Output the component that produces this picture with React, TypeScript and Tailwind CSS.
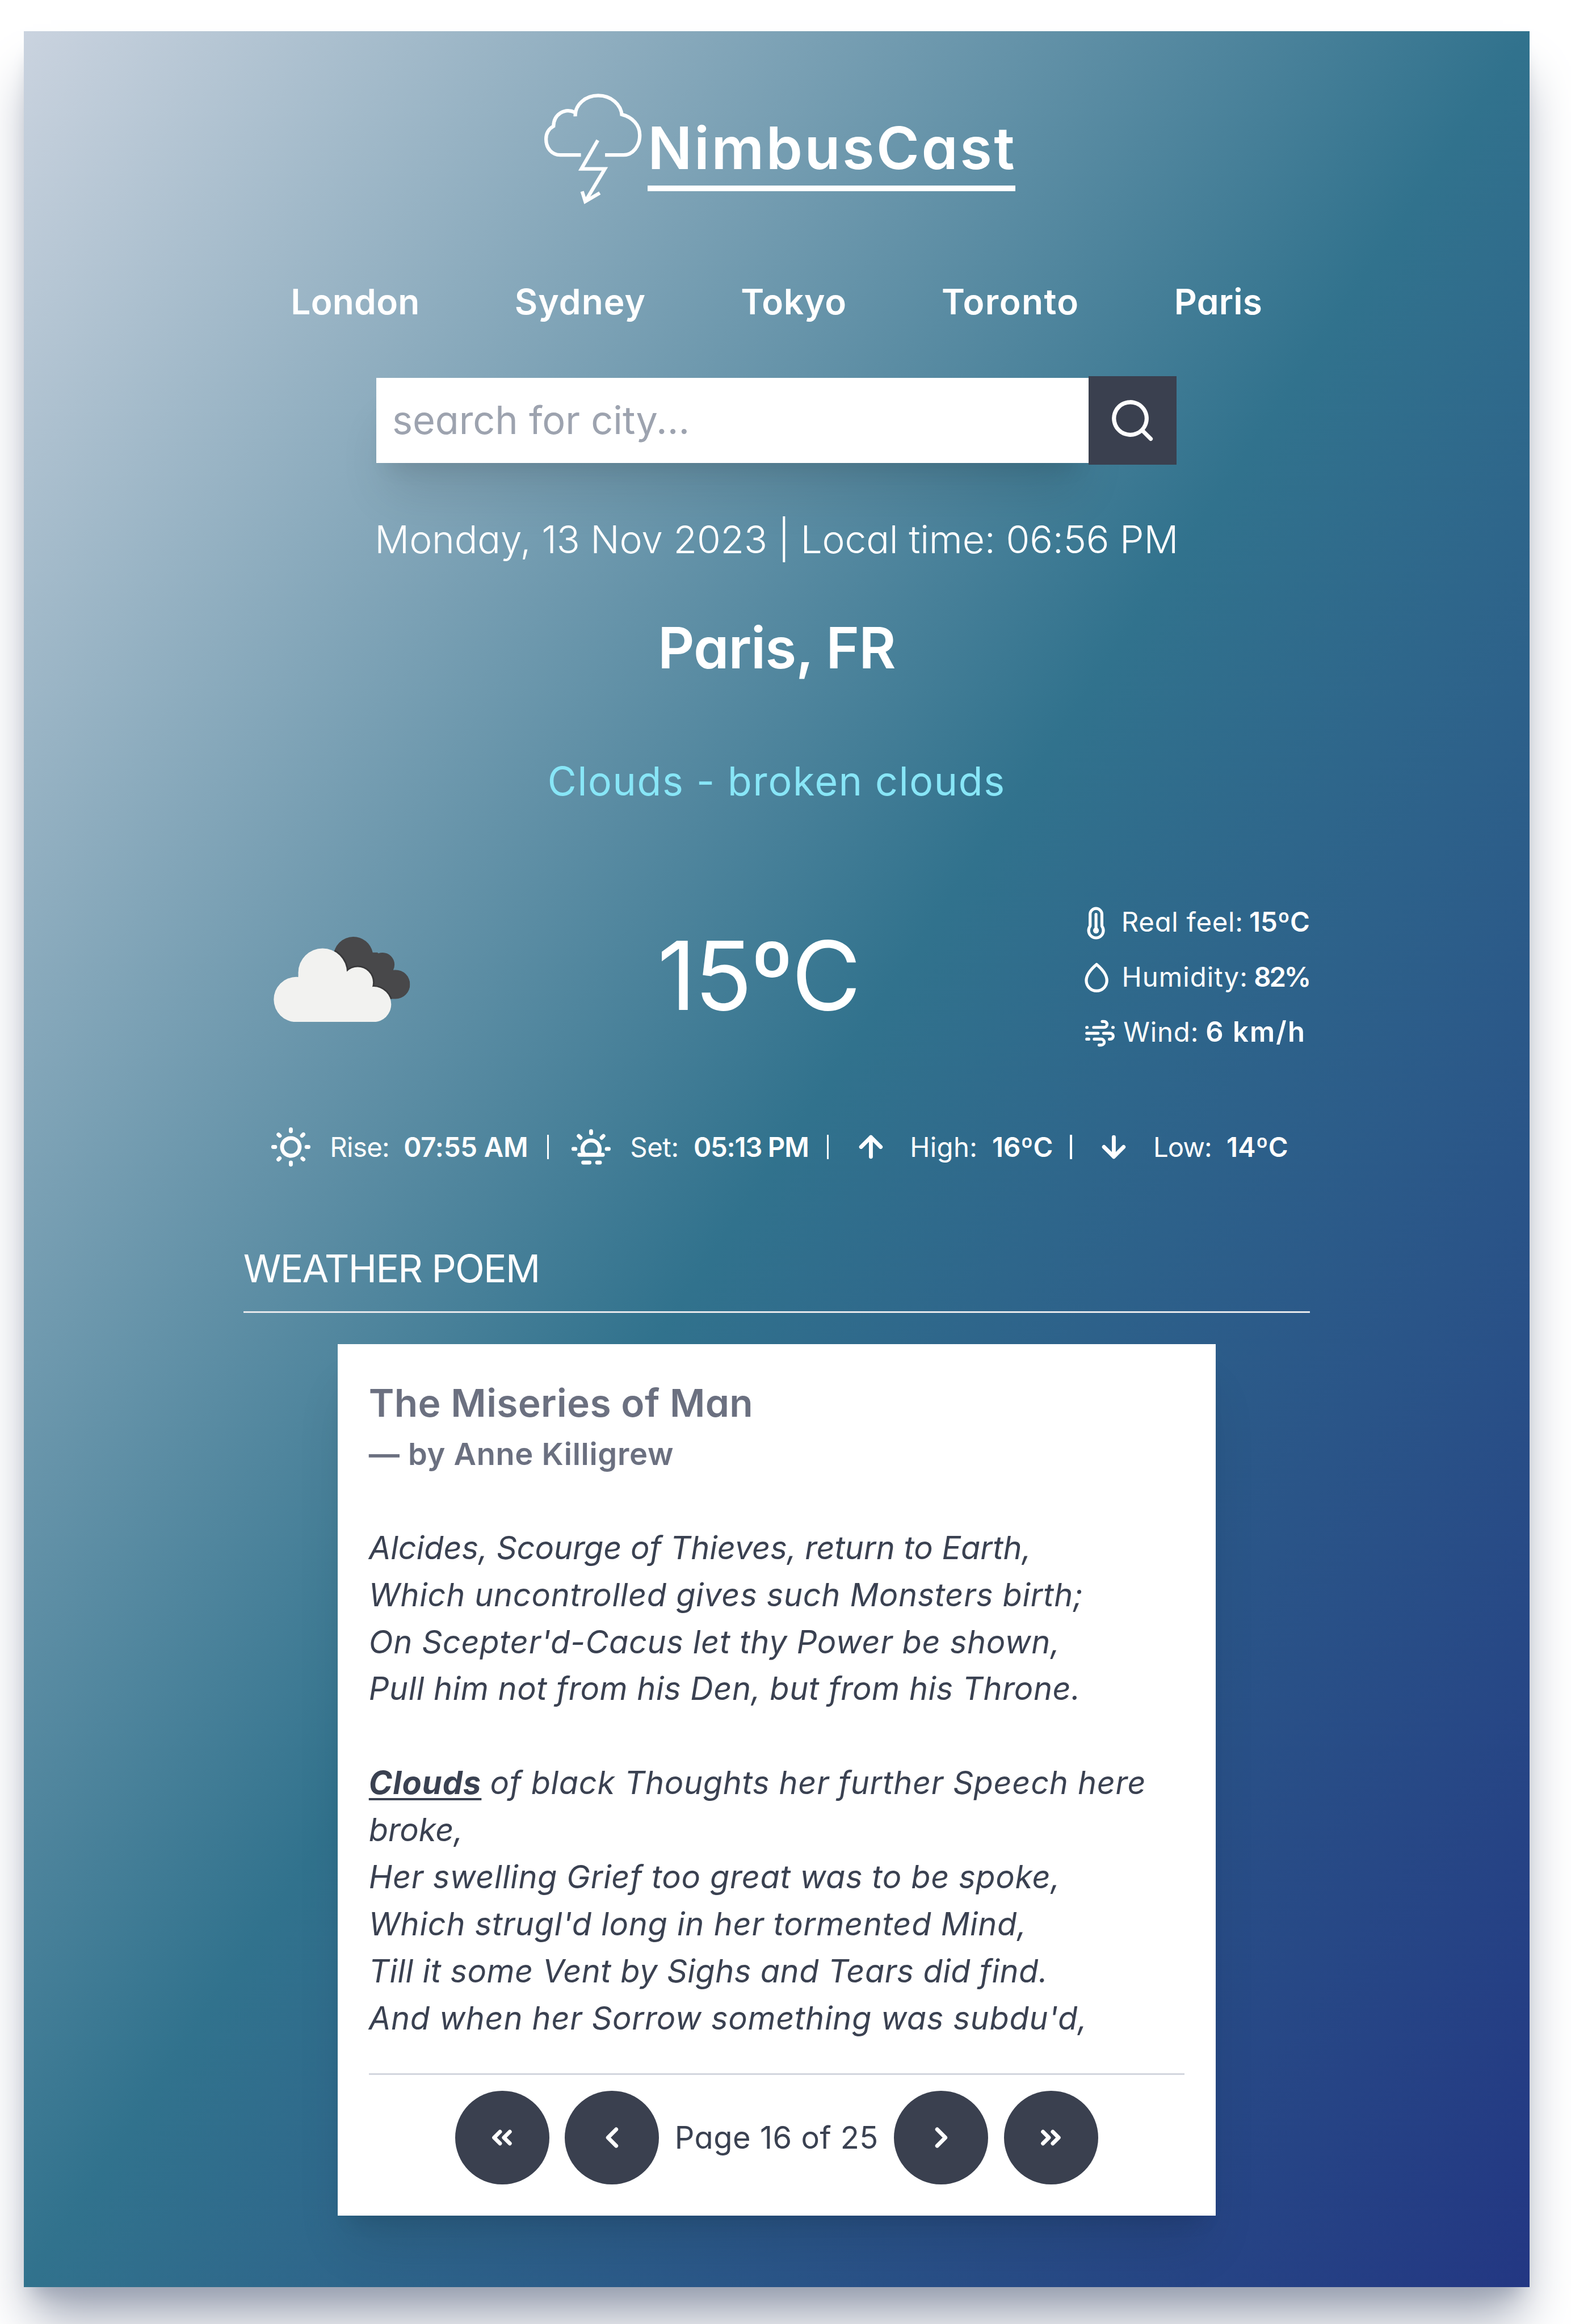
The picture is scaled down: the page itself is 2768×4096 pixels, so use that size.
import type { ReactNode } from "react";

const cities = [
  { name: "London", tracking: "tracking-[0.08px]" },
  { name: "Sydney", tracking: "tracking-[0.32px]" },
  { name: "Tokyo", tracking: "tracking-[0.2px]" },
  { name: "Toronto", tracking: "tracking-[0.43px]" },
  { name: "Paris", tracking: "tracking-[0.08px]" },
];

const firstStanza = [
  { text: "Alcides, Scourge of Thieves, return to Earth,", tracking: "tracking-[-0.02px]" },
  { text: "Which uncontrolled gives such Monsters birth;", tracking: "tracking-[0.19px]" },
  { text: "On Scepter'd-Cacus let thy Power be shown,", tracking: "tracking-[0.19px]" },
  { text: "Pull him not from his Den, but from his Throne.", tracking: "tracking-[0.15px]" },
];

const secondStanza = [
  { text: "broke,", tracking: "tracking-normal" },
  { text: "Her swelling Grief too great was to be spoke,", tracking: "tracking-[0.17px]" },
  { text: "Which strugl'd long in her tormented Mind,", tracking: "tracking-[0.21px]" },
  { text: "Till it some Vent by Sighs and Tears did find.", tracking: "tracking-[0.13px]" },
  { text: "And when her Sorrow something was subdu'd,", tracking: "tracking-[0.2px]" },
];

function StrokeIcon({ className, children }: { className: string; children: ReactNode }) {
  return (
    <svg
      className={className}
      viewBox="0 0 24 24"
      fill="none"
      stroke="currentColor"
      strokeWidth="2"
      strokeLinecap="round"
      strokeLinejoin="round"
    >
      {children}
    </svg>
  );
}

function Logo() {
  return (
    <svg
      className="h-[56.4px] w-[49.6px] shrink-0"
      viewBox="0 0 49.6 56.4"
      fill="none"
      stroke="currentColor"
      strokeWidth="1.8"
    >
      <path d="M15.8 11.6C15.6 5.6 21 1 27.5 1s11.9 4.5 12.1 10.4" />
      <path d="M15.7 9.6C10.4 7 4.8 10.6 4.7 16.6 2 18.1.9 20.4.9 23.2c0 4.7 3 8.1 7.2 8.1h10.6" />
      <path d="M39.4 10.6C45 12 48.7 16 48.7 21.2c0 5.6-3.6 10.1-8.3 10.1H31" />
      <path d="M27.3 23.8 18.9 38.4h12L21.5 54" />
      <path d="M19.3 49.9 20.9 55l7.4-4.3" />
    </svg>
  );
}

function BrokenClouds() {
  return (
    <svg className="h-[43.5px] w-[69.6px]" viewBox="0 0 69.6 43.5">
      <defs>
        <clipPath id="rear-cloud">
          <circle cx="40.7" cy="10.1" r="10.1" />
          <circle cx="55.6" cy="14.2" r="6.1" />
          <circle cx="62.2" cy="24.3" r="7.4" />
          <path d="M33 8h20l9 10v13.7H40z" />
        </clipPath>
      </defs>
      <g clipPath="url(#rear-cloud)">
        <rect width="69.6" height="43.5" fill="#48484a" />
        <g fill="#38383a">
          <circle cx="25" cy="18.3" r="13.2" />
          <circle cx="42.9" cy="23.3" r="8.6" />
          <circle cx="51" cy="34.6" r="9.8" />
        </g>
      </g>
      <g fill="#f2f2f0">
        <circle cx="25" cy="18.3" r="12.4" />
        <circle cx="42.9" cy="23.3" r="7.8" />
        <circle cx="51" cy="34.5" r="9" />
        <circle cx="11.6" cy="32" r="11.5" />
        <path d="M12.7 18.3h25l5 5 8 11v9.2H11z" />
      </g>
    </svg>
  );
}

function Detail({ icon, children }: { icon: ReactNode; children: ReactNode }) {
  return (
    <div className="flex h-5 items-center">
      {icon}
      {children}
    </div>
  );
}

function Separator() {
  return <span className="mx-[1.5px] h-[12.5px] w-[0.9px] bg-white" />;
}

function PageButton({ children }: { children: ReactNode }) {
  return (
    <button className="flex size-12 items-center justify-center rounded-full bg-[#3a404f] text-white">
      <StrokeIcon className="size-6">{children}</StrokeIcon>
    </button>
  );
}

export default function App() {
  return (
    <div className="h-[1185.7px] w-[801.3px] overflow-hidden bg-white font-[Inter,sans-serif] [font-feature-settings:'cv11'] [zoom:3.4544]">
      <main className="mt-[15.9px] ml-[12.1px] h-[1150.9px] w-[768px] bg-[linear-gradient(to_bottom_right,#cad3df,#31728d_50%,#233783)] px-28 pt-8 text-white shadow-[0_20px_25px_-5px_#9ca3b3,0_8px_10px_-6px_#9ca3b3]">
        <header className="flex justify-center gap-[3.1px] pl-[3.4px]">
          <Logo />
          <h1 className="mt-[9.75px] h-[39.9px] w-[187.5px] border-b-[3px] border-white text-[29.8px] leading-9 font-semibold tracking-[1.02px] whitespace-nowrap">
            NimbusCast
          </h1>
        </header>

        <nav className="mt-[35.8px] flex justify-around text-[18px] leading-7 font-semibold">
          {cities.map((city) => (
            <button key={city.name} className={city.tracking}>
              {city.name}
            </button>
          ))}
        </nav>

        <div className="mt-[23.9px] flex items-center justify-center">
          <div className="h-[43.6px] w-[363.2px] bg-white px-2 text-[19.8px] leading-[43px] text-[#9da3af] shadow-xl">
            search for city...
          </div>
          <button className="relative flex size-[45px] items-center justify-center bg-[#3a404f]">
            <svg className="size-[25px]" viewBox="0 0 24 24" fill="currentColor">
              <path d="M21.71,20.29,18,16.61A9,9,0,1,0,16.61,18l3.68,3.68a1,1,0,0,0,1.42,0A1,1,0,0,0,21.71,20.29ZM11,18a7,7,0,1,1,7-7A7,7,0,0,1,11,18Z" />
            </svg>
          </button>
        </div>

        <p className="mt-6 text-center text-[19.6px] leading-7 font-light tracking-[-0.05px] whitespace-nowrap">
          Monday, 13 Nov 2023 | Local time: 06:56 PM
        </p>
        <h2 className="mt-[23.75px] text-center text-[29px] leading-9 font-semibold tracking-[-0.3px]">
          Paris, FR
        </h2>
        <p className="mt-9 text-center text-[20.2px] leading-7 tracking-[0.5px] text-[#88e6f7]">
          Clouds - broken clouds
        </p>

        <section className="mt-[47.7px] flex h-[76px] items-center justify-between pl-[15.5px]">
          <div className="mt-[2.5px]">
            <BrokenClouds />
          </div>
          <p className="mt-[-1.4px] ml-[14.5px] text-[48.5px] leading-none tracking-[-0.86px]">15ºC</p>
          <div className="flex flex-col items-center gap-2 text-[13.7px] leading-5">
            <Detail
              icon={
                <StrokeIcon className="mt-[1px] mr-[4px] size-[18px]">
                  <path d="M8 6a4 4 0 0 1 8 0v8a5 5 0 1 1-8 0z" />
                  <path d="M12 6v11" />
                  <circle cx="12" cy="17" r="1" />
                </StrokeIcon>
              }
            >
              <span className="tracking-[0.21px]">Real feel:</span>
              <span className="ml-[3px] font-semibold">15ºC</span>
            </Detail>
            <Detail
              icon={
                <StrokeIcon className="mt-[1px] mr-[4px] size-[18px]">
                  <path d="M12 3C8 6.4 5 9.9 5 14a7 7 0 0 0 14 0c0-4.1-3-7.6-7-11z" />
                </StrokeIcon>
              }
            >
              <span className="tracking-[0.3px]">Humidity:</span>
              <span className="ml-[3px] font-semibold tracking-[-0.9px]">82%</span>
            </Detail>
            <Detail
              icon={
                <StrokeIcon className="mt-[1.6px] mr-[3px] size-[18px]">
                  <path d="M3 8h.3M7.7 8h7.1a2 2 0 0 0 0-4h-1.3M20.7 8h.3" />
                  <path d="M3 12h7.7M14.4 12H19a2 2 0 0 1 0 4h-.6" />
                  <path d="M3 16h1.4M8.1 16h4.8a2 2 0 0 1 0 4H11.4" />
                </StrokeIcon>
              }
            >
              <span className="tracking-[0.25px]">Wind:</span>
              <span className="ml-[3.5px] text-[14.2px] font-semibold tracking-[0.6px]">6 km/h</span>
            </Detail>
          </div>
        </section>

        <section className="mt-[36.7px] flex h-6 items-center justify-center gap-2 text-[13.7px] leading-5 whitespace-nowrap">
          <svg className="size-6" viewBox="0 0 24 24" fill="currentColor">
            <path d="M5.64,17l-.71.71a1,1,0,0,0,0,1.41,1,1,0,0,0,1.41,0l.71-.71A1,1,0,0,0,5.64,17ZM5,12a1,1,0,0,0-1-1H3a1,1,0,0,0,0,2H4A1,1,0,0,0,5,12Zm7-7a1,1,0,0,0,1-1V3a1,1,0,0,0-2,0V4A1,1,0,0,0,12,5ZM5.64,7.05a1,1,0,0,0,.7.29,1,1,0,0,0,.71-.29,1,1,0,0,0,0-1.41l-.71-.71A1,1,0,0,0,4.93,6.34Zm12,.29a1,1,0,0,0,.7-.29l.71-.71a1,1,0,1,0-1.41-1.41L17,5.64a1,1,0,0,0,0,1.41A1,1,0,0,0,17.66,7.34ZM21,11H20a1,1,0,0,0,0,2h1a1,1,0,0,0,0-2Zm-9,8a1,1,0,0,0-1,1v1a1,1,0,0,0,2,0V20A1,1,0,0,0,12,19ZM18.36,17A1,1,0,0,0,17,18.36l.71.71a1,1,0,0,0,1.41,0,1,1,0,0,0,0-1.41ZM12,6.5A5.5,5.5,0,1,0,17.5,12,5.51,5.51,0,0,0,12,6.5Zm0,9A3.5,3.5,0,1,1,15.5,12,3.5,3.5,0,0,1,12,15.5Z" />
          </svg>
          <span className="w-[29.6px] tracking-[-0.2px]">Rise:</span>
          <span className="w-[63.6px] font-semibold tracking-[-0.05px]">07:55 AM</span>
          <Separator />
          <StrokeIcon className="size-6">
            <path d="M8.7 16a4.4 4.4 0 1 1 6.6 0M6 16h12" />
            <path d="M12 4v1M3 13h1M20 13h1M5.7 6.4l.9.9M18.3 6.4l-.9.9M8 20h3.2M15.1 20h1.4" />
          </StrokeIcon>
          <span className="w-[24.4px] tracking-[-0.1px]">Set:</span>
          <span className="w-[58.5px] font-semibold tracking-[-0.35px]">05:13 PM</span>
          <Separator />
          <StrokeIcon className="size-6">
            <path d="M12 17V7M7 12l5-5 5 5" />
          </StrokeIcon>
          <span className="w-[33.9px] tracking-[0.09px]">High:</span>
          <span className="w-[30.3px] font-semibold">16ºC</span>
          <Separator />
          <StrokeIcon className="size-6">
            <path d="M12 7v10M7 12l5 5 5-5" />
          </StrokeIcon>
          <span className="w-[29.4px] tracking-[-0.27px]">Low:</span>
          <span className="w-[30.3px] font-semibold">14ºC</span>
        </section>

        <h3 className="mt-[35.9px] text-[19.6px] leading-7 tracking-[-0.5px]">WEATHER POEM</h3>
        <hr className="mt-2 border-t border-[#e5e7eb]" />

        <article className="mx-auto mt-[15.9px] h-[444.8px] w-md bg-white p-4 text-[15.7px] leading-6 whitespace-nowrap text-[#3a4151] shadow-xl">
          <h4 className="text-[19.6px] leading-7 font-semibold tracking-[0.1px] text-[#6b7080]">
            The Miseries of Man
          </h4>
          <p className="font-semibold tracking-[0.2px] text-[#6b7080]">— by Anne Killigrew</p>
          <div className="mt-6 text-[16.2px] italic">
            {firstStanza.map((line) => (
              <p key={line.text} className={line.tracking}>
                {line.text}
              </p>
            ))}
            <p className="mt-6 flex gap-[4.4px] tracking-[0.19px]">
              <span className="font-bold tracking-[0.3px] underline decoration-[1.3px] underline-offset-2">
                Clouds
              </span>
              <span>of black Thoughts her further Speech here</span>
            </p>
            {secondStanza.map((line) => (
              <p key={line.text} className={line.tracking}>
                {line.text}
              </p>
            ))}
          </div>
          <hr className="mt-4 border-t border-[#d3d6de]" />
          <div className="mt-2 flex items-center justify-center gap-2">
            <PageButton>
              <path d="m11 9-3 3 3 3M16 9l-3 3 3 3" />
            </PageButton>
            <PageButton>
              <path d="m14.1 7.8-4.2 4.2 4.2 4.2" />
            </PageButton>
            <span className="tracking-[0.15px]">Page 16 of 25</span>
            <PageButton>
              <path d="m9.9 7.8 4.2 4.2-4.2 4.2" />
            </PageButton>
            <PageButton>
              <path d="m8 9 3 3-3 3M13 9l3 3-3 3" />
            </PageButton>
          </div>
        </article>
      </main>
    </div>
  );
}
